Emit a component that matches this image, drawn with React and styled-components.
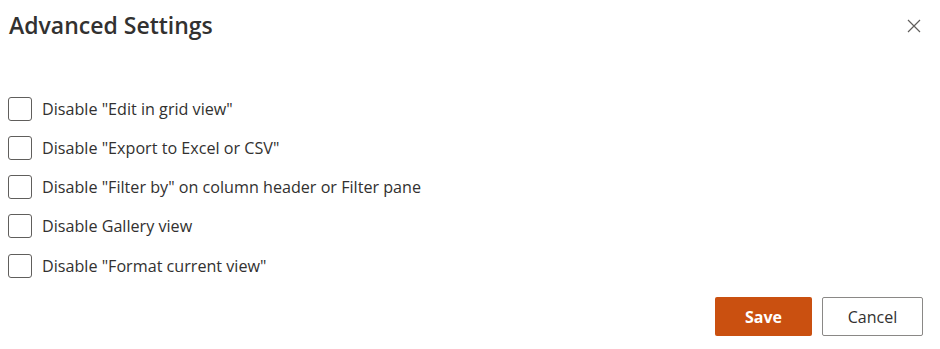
import styled, { createGlobalStyle } from 'styled-components';

const GlobalStyle = createGlobalStyle`
  html, body {
    margin: 0;
    padding: 0;
    background: #fff;
  }
  body {
    font-family: 'Open Sans', 'Noto Sans', sans-serif;
    color: #323130;
  }
`;

const options = [
  'Disable "Edit in grid view"',
  'Disable "Export to Excel or CSV"',
  'Disable "Filter by" on column header or Filter pane',
  'Disable Gallery view',
  'Disable "Format current view"',
];

const App = () => {
  return (
    <>
      <GlobalStyle />
      <Dialog>
        <Header>
          <Title>Advanced Settings</Title>
          <CloseButton aria-label="Close">
            <svg width="16" height="16" viewBox="0 0 16 16">
              <path d="M2 2 L14 14 M14 2 L2 14" stroke="#605e5c" strokeWidth="1.2" fill="none" />
            </svg>
          </CloseButton>
        </Header>
        <OptionList>
          {options.map((label) => (
            <OptionRow key={label}>
              <Box />
              <Label>{label}</Label>
            </OptionRow>
          ))}
        </OptionList>
        <Footer>
          <PrimaryButton>Save</PrimaryButton>
          <DefaultButton>Cancel</DefaultButton>
        </Footer>
      </Dialog>
    </>
  );
};

/* **********
 *  STYLES  *
 ********* */

const Dialog = styled.div`
  width: 940px;
  height: 349px;
  box-sizing: border-box;
  padding: 0 17px 0 8px;
  display: flex;
  flex-direction: column;
`;

const Header = styled.div`
  display: flex;
  align-items: center;
  justify-content: space-between;
  height: 50px;
  padding-left: 1px;
`;

const Title = styled.h1`
  margin: 0;
  font-size: 23px;
  font-weight: 600;
  color: #323130;
`;

const CloseButton = styled.button`
  border: none;
  background: transparent;
  padding: 0;
  width: 16px;
  height: 16px;
  display: flex;
  margin-right: 1px;
  margin-top: 2px;
`;

const OptionList = styled.div`
  display: flex;
  flex-direction: column;
  gap: 16.3px;
  margin-top: 47px;
`;

const OptionRow = styled.label`
  display: flex;
  align-items: center;
  gap: 10px;
  height: 23px;
`;

const Box = styled.span`
  width: 22px;
  height: 22px;
  border: 1px solid #605e5c;
  border-radius: 3px;
  flex-shrink: 0;
`;

const Label = styled.span`
  font-size: 16.15px;
  color: #323130;
`;

const Footer = styled.div`
  display: flex;
  justify-content: flex-end;
  gap: 10px;
  margin-top: auto;
  margin-bottom: 13px;
`;

const PrimaryButton = styled.button`
  width: 97px;
  height: 39px;
  border: none;
  border-radius: 2px;
  background: #ca5010;
  color: #fff;
  font-family: inherit;
  font-size: 16px;
  font-weight: 700;
`;

const DefaultButton = styled.button`
  width: 101px;
  height: 39px;
  border: 1px solid #8a8886;
  border-radius: 2px;
  background: #fff;
  color: #323130;
  font-family: inherit;
  font-size: 16px;
`;

export default App;
